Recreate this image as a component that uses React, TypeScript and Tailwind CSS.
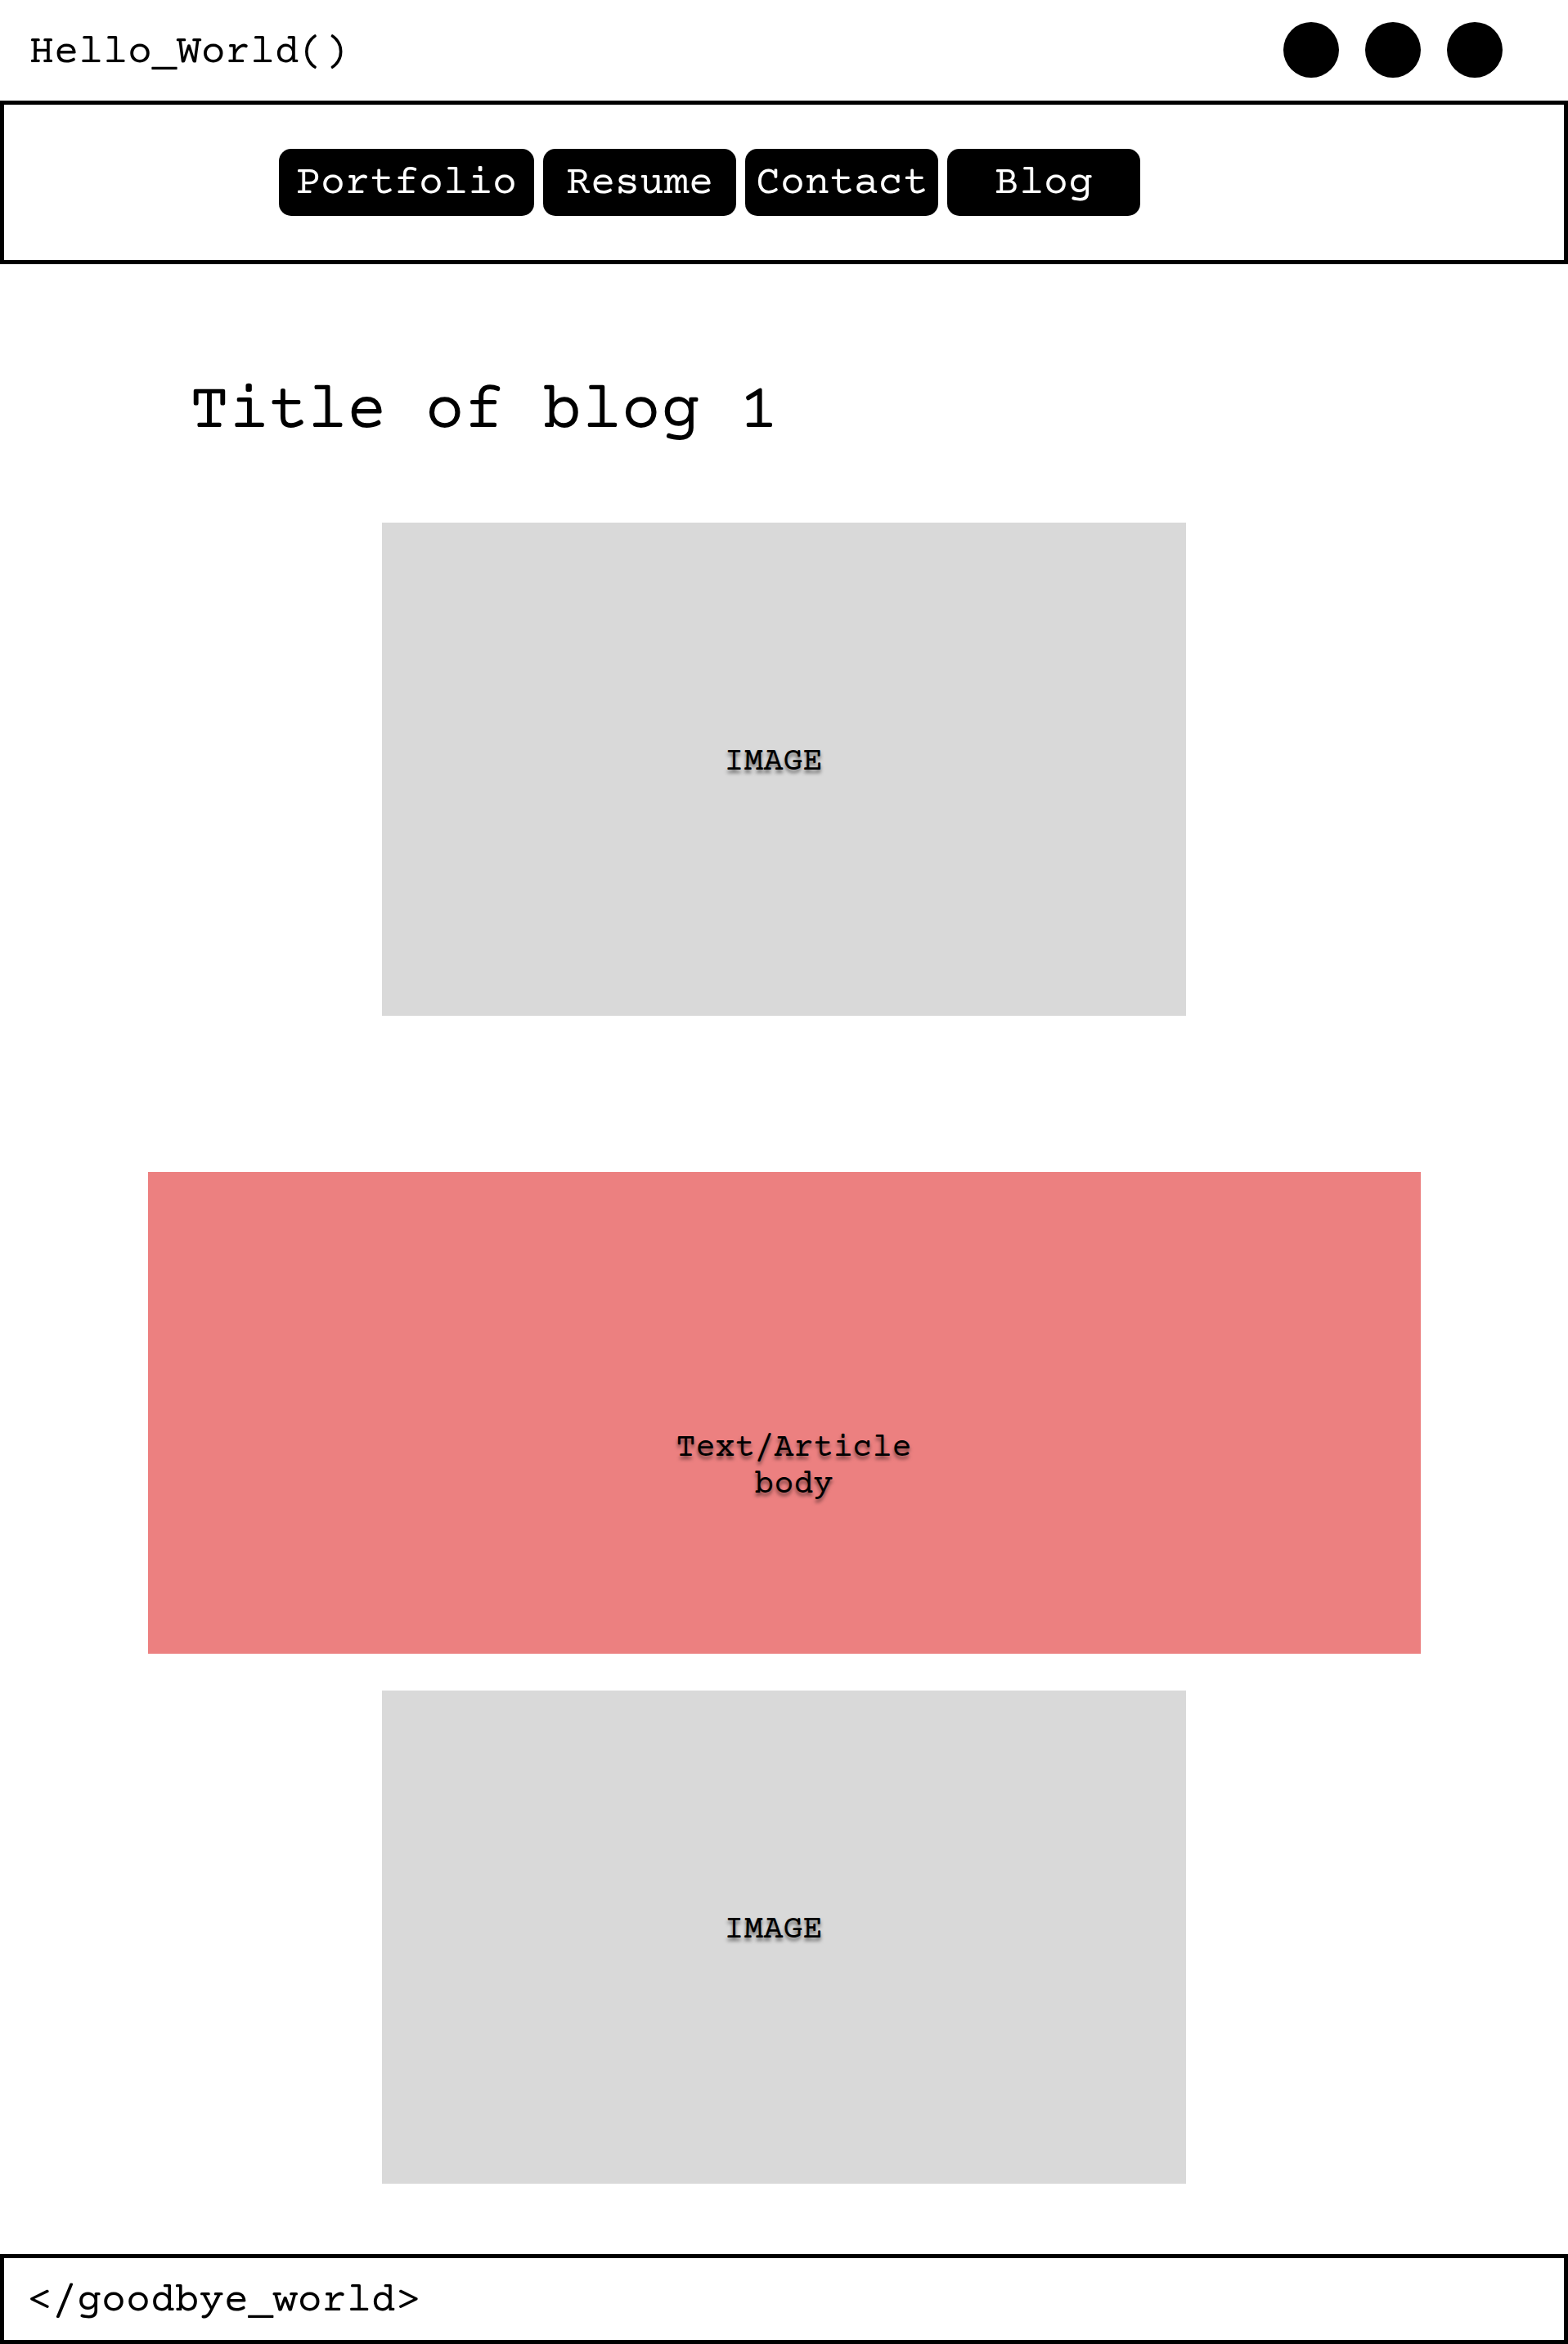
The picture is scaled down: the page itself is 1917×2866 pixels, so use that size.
const links = [
  { label: "Portfolio", width: "w-[312px]" },
  { label: "Resume", width: "w-[236px]" },
  { label: "Contact", width: "w-[236px]" },
  { label: "Blog", width: "w-[236px]" },
];

function ImagePlaceholder() {
  return (
    <figure className="mx-auto flex h-[603px] w-full max-w-[983px] items-center justify-center bg-[#d9d9d9] pr-[26px] pb-4">
      <figcaption className="text-[40px] leading-[45px] [text-shadow:0_4px_4px_rgba(0,0,0,0.5)]">IMAGE</figcaption>
    </figure>
  );
}

export default function App() {
  return (
    <div className="flex min-h-screen flex-col bg-white font-['Courier_Prime','Courier_New','Liberation_Mono',monospace] text-black">
      <header className="flex h-[123px] items-center justify-between pr-20 pb-px pl-9">
        <p className="pt-2 text-[50px] leading-[56px]">Hello_World()</p>
        <div className="flex gap-8">
          <span className="size-[68px] rounded-full bg-black" />
          <span className="size-[68px] rounded-full bg-black" />
          <span className="size-[68px] rounded-full bg-black" />
        </div>
      </header>
      <nav className="flex h-[200px] items-center gap-[11px] border-5 border-black pl-[336px]">
        {links.map((link) => (
          <a
            key={link.label}
            href="#"
            className={`flex h-[82px] items-center justify-center rounded-[15px] bg-black pt-1 text-[50px] leading-[56px] text-white ${link.width}`}
          >
            {link.label}
          </a>
        ))}
      </nav>
      <main className="flex-1">
        <h1 className="pt-[136px] pb-[90px] pl-[232px] text-[80px] leading-[90px]">Title of blog 1</h1>
        <ImagePlaceholder />
        <article className="mx-auto mt-[191px] mb-[45px] flex h-[589px] w-full max-w-[1556px] items-center justify-center bg-[#ec8080] pt-[132px] pl-6">
          <p className="w-[288px] text-center text-[40px] leading-[45px] [text-shadow:0_4px_4px_rgba(0,0,0,0.5)]">Text/Article body</p>
        </article>
        <ImagePlaceholder />
      </main>
      <footer className="flex h-[110px] items-center border-5 border-black pt-1.5 pl-[29px]">
        <p className="text-[50px] leading-[56px]">&lt;/goodbye_world&gt;</p>
      </footer>
    </div>
  );
}
